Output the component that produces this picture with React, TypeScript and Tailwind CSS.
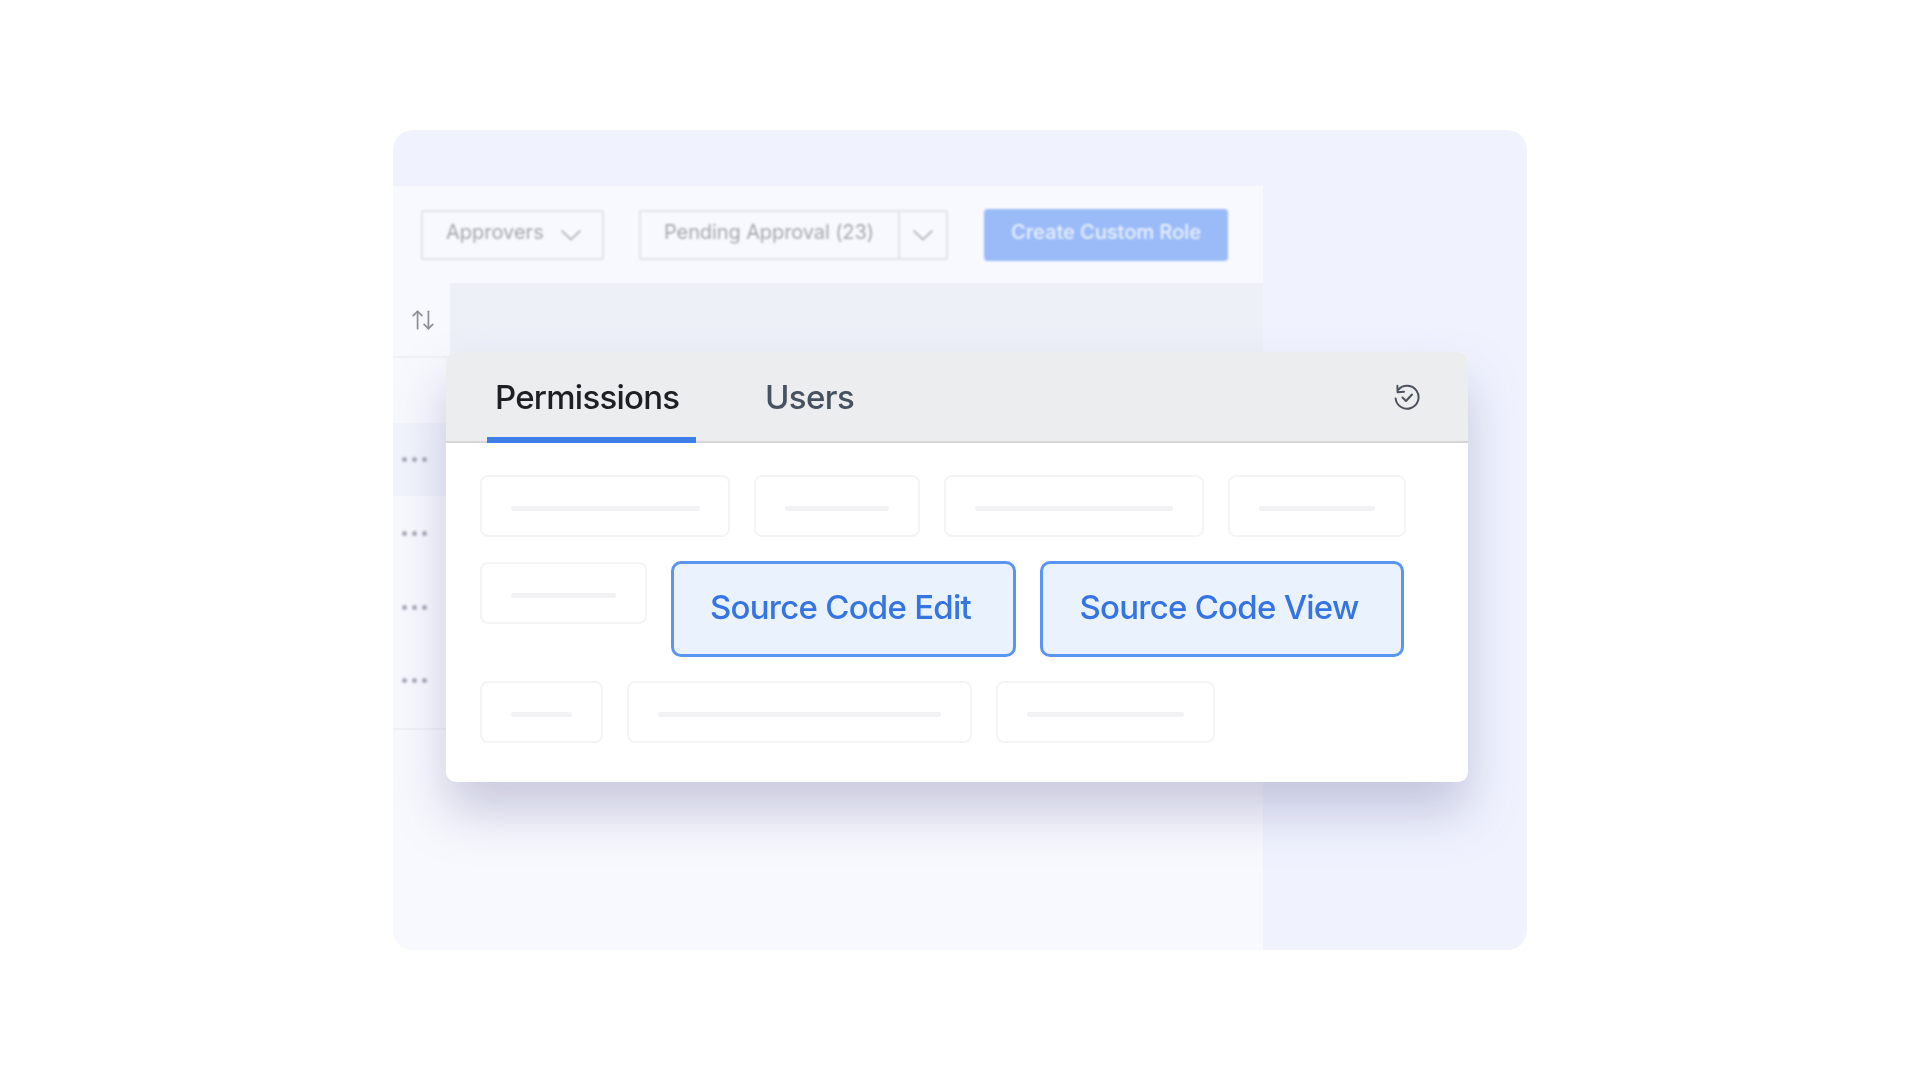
import { ArrowUpDown } from 'lucide-react'

const rows = [
  [
    { w: 'w-[250px]', bar: 'w-[189px]' },
    { w: 'w-[166px]', bar: 'w-[104px]' },
    { w: 'w-[260px]', bar: 'w-[198px]' },
    { w: 'w-[178px]', bar: 'w-[116px]' },
  ],
  [
    { w: 'w-[123px]', bar: 'w-[61px]' },
    { w: 'w-[345px]', bar: 'w-[283px]' },
    { w: 'w-[219px]', bar: 'w-[157px]' },
  ],
]

function Chip({ w, bar }: { w: string; bar: string }) {
  return (
    <div className={`${w} h-[62px] shrink-0 flex items-center justify-center pt-[5px] rounded-[8px] border-2 border-[#f4f4f6] bg-white`}>
      <div className={`${bar} h-[5px] rounded-[2px] bg-[#f2f2f4]`} />
    </div>
  )
}

function BlueChip({ w, label }: { w: string; label: string }) {
  return (
    <div className={`${w} h-[96px] -mt-[1px] shrink-0 flex items-center justify-center pr-[6px] pb-[2px] rounded-[10px] border-[3px] border-[#5b95f2] bg-[#eaf2fe] text-[#3574e3] text-[33px] tracking-[-0.75px] font-[550]`}>
      {label}
    </div>
  )
}

function Dots() {
  return (
    <div className="flex gap-[5px] pl-[9px] blur-[0.8px]">
      <span className="w-[5px] h-[5px] rounded-full bg-[#a9abb9]" />
      <span className="w-[5px] h-[5px] rounded-full bg-[#a9abb9]" />
      <span className="w-[5px] h-[5px] rounded-full bg-[#a9abb9]" />
    </div>
  )
}

function Chevron() {
  return (
    <svg className="w-[22px] h-[12px] shrink-0" viewBox="0 0 22 12" fill="none" stroke="currentColor" strokeWidth="1.6">
      <path d="M1.5 1.5 11 10.5 20.5 1.5" />
    </svg>
  )
}

export default function App() {
  return (
    <div className="w-full h-screen flex items-center justify-center bg-white font-['Inter',sans-serif]">
      <div className="relative w-[1134px] h-[820px] pt-[56px] rounded-[20px] overflow-hidden bg-[#f0f3fe]">
        {/* blurred page behind the panel */}
        <div className="w-[870px] h-full flex flex-col bg-[#f8f9fe]">
          <div className="h-[97px] shrink-0 flex items-center pl-[28px] pt-[1px] blur-[1px]">
            <div className="w-[183px] h-[50px] flex items-center pl-[23px] gap-[16px] border-2 border-[#e2e3e8] rounded-[2px] text-[#a6a7ad] text-[20px]">
              <span className="pb-[6px]">Approvers</span>
              <Chevron />
            </div>
            <div className="ml-[35px] w-[309px] h-[50px] flex items-center border-2 border-[#e2e3e8] rounded-[2px] text-[#a6a7ad] text-[20px]">
              <div className="w-[259px] h-full flex items-center pl-[23px] border-r-2 border-[#e2e3e8]">
                <span className="pb-[6px] tracking-[-0.1px]">Pending Approval (23)</span>
              </div>
              <div className="flex-1 flex justify-center">
                <Chevron />
              </div>
            </div>
            <div className="ml-[36px] w-[244px] h-[52px] flex items-center justify-center rounded-[4px] bg-[#9abbf8] text-[#e9f0fe] text-[20px] font-medium">
              <span className="pb-[6px]">Create Custom Role</span>
            </div>
          </div>
          <div className="h-[75px] shrink-0 flex">
            <div className="w-[57px] flex items-center justify-center pl-[2px] border-b-2 border-[#f0f1f6] text-[#8b9099]">
              <ArrowUpDown className="w-[26px] h-[26px] blur-[0.6px]" strokeWidth={1.6} />
            </div>
            <div className="flex-1 bg-[#eef0f8]" />
          </div>
          <div className="mt-[65px] pb-[11px] border-b-2 border-[#f0f1f6]">
            <div className="h-[73px] flex items-center bg-[#f1f4fc]"><Dots /></div>
            <div className="h-[74px] flex items-center"><Dots /></div>
            <div className="h-[74px] flex items-center"><Dots /></div>
            <div className="h-[73px] flex items-center"><Dots /></div>
          </div>
        </div>

        {/* floating permissions panel */}
        <div className="absolute left-[53px] top-[222px] w-[1022px] h-[430px] rounded-[10px] bg-white shadow-[0_30px_50px_rgba(110,110,160,0.34)] overflow-hidden blur-[0.5px]">
          <div className="h-[91px] flex items-end pl-[41px] pr-[47px] border-b-2 border-[#d6d6d8] bg-[#ecedef]">
            <div className="w-[209px] h-[91px] -mb-[2px] flex items-center pl-[8px] pt-[6px] border-b-[6px] border-[#3f7ee8] text-[#1d1f22] text-[33px] tracking-[-0.75px] font-[550]">
              Permissions
            </div>
            <div className="ml-[69px] h-[91px] -mb-[2px] flex items-center text-[#46525f] text-[33px] tracking-[-0.6px] font-medium">
              Users
            </div>
            <svg className="ml-auto mb-[30px] w-[28px] h-[28px] text-[#4a525c]" viewBox="0 0 28 28" fill="none" stroke="currentColor" strokeWidth="2" strokeLinecap="round" strokeLinejoin="round">
              <path d="M5.5 6.5A11.5 11.5 0 1 1 2.6 15.5" />
              <path d="M4.4 2.8 4.6 9.2 11 8.8" />
              <path d="M9.5 14.5l3.5 3.5 6-6.5" />
            </svg>
          </div>
          <div className="flex flex-col gap-[24px] pt-[32px] pl-[34px]">
            <div className="flex gap-[24px]">
              {rows[0].map((c) => <Chip key={c.w} w={c.w} bar={c.bar} />)}
            </div>
            <div className="flex items-start gap-[24px] mt-[1px]">
              <Chip w="w-[167px]" bar="w-[105px]" />
              <BlueChip w="w-[345px]" label="Source Code Edit" />
              <BlueChip w="w-[364px]" label="Source Code View" />
            </div>
            <div className="flex gap-[24px]">
              {rows[1].map((c) => <Chip key={c.w} w={c.w} bar={c.bar} />)}
            </div>
          </div>
        </div>
      </div>
    </div>
  )
}
